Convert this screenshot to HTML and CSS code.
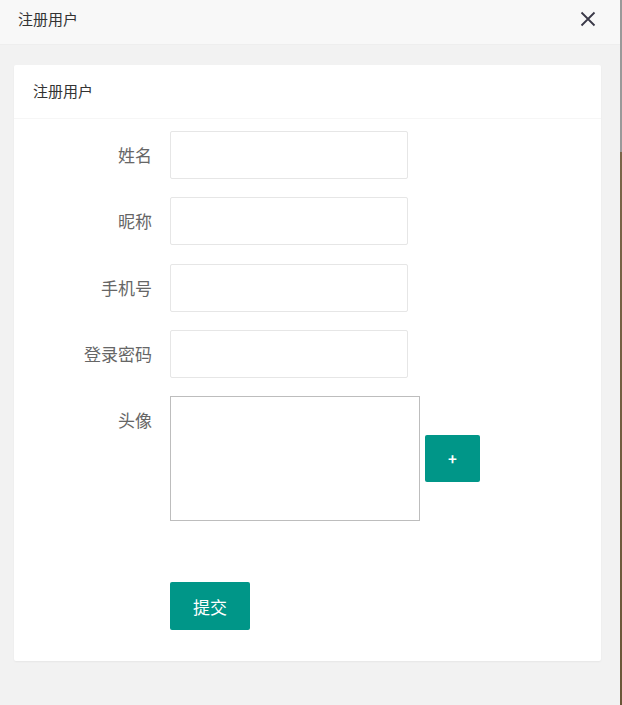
FILE: index.html
```html
<!DOCTYPE html>
<html lang="zh-CN">
<head>
    <meta charset="UTF-8">
    <meta name="viewport" content="width=device-width, initial-scale=1.0">
    <title>注册用户</title>
    <link rel="stylesheet" href="styles.css">
</head>
<body>

<div class="layer">
    <div class="layer-title">
        注册用户
        <span class="layer-close">
            <svg width="16" height="16" viewBox="0 0 16 16">
                <path d="M1.5 1.5 L14.5 14.5 M14.5 1.5 L1.5 14.5" stroke="#3a3948" stroke-width="1.8" fill="none"/>
            </svg>
        </span>
    </div>
    <div class="layer-content">
        <div class="card">
            <div class="card-header">注册用户</div>
            <div class="card-body">
                <div class="form-item">
                    <label class="form-label">姓名</label>
                    <input class="form-input" type="text">
                </div>
                <div class="form-item">
                    <label class="form-label">昵称</label>
                    <input class="form-input" type="text">
                </div>
                <div class="form-item">
                    <label class="form-label">手机号</label>
                    <input class="form-input" type="text">
                </div>
                <div class="form-item">
                    <label class="form-label">登录密码</label>
                    <input class="form-input" type="password">
                </div>
                <div class="form-item avatar-item">
                    <label class="form-label">头像</label>
                    <div class="avatar-row">
                        <div class="avatar-box"></div>
                        <button class="btn btn-add" type="button">+</button>
                    </div>
                </div>
                <div class="form-item submit-item">
                    <span></span>
                    <div>
                        <button class="btn btn-submit" type="button">提交</button>
                    </div>
                </div>
            </div>
        </div>
    </div>
</div>
<div class="edge"></div>

</body>
</html>
```

FILE: styles.css
```css
body {
    margin: 0;
    display: flex;
    height: 705px;
    overflow: hidden;
    font-family: "Noto Sans CJK SC", "Noto Sans", sans-serif;
    background: #f2f2f2;
}
.layer {
    width: 620px;
    height: 705px;
    background: #f2f2f2;
}
.edge {
    width: 2px;
    height: 705px;
    background: linear-gradient(#999 0, #999 152px, #7a6548 152px, #6a5637 100%);
}
.layer-title {
    position: relative;
    height: 44px;
    line-height: 38px;
    padding-left: 18px;
    font-size: 15px;
    color: #333;
    background: #f8f8f8;
    border-bottom: 1px solid #eee;
}
.layer-close {
    position: absolute;
    right: 24px;
    top: 11px;
    width: 16px;
    height: 16px;
    line-height: 0;
}
.layer-content {
    padding: 20px 19px 0 14px;
}
.card {
    background: #fff;
    border-radius: 2px;
    box-shadow: 0 1px 2px 0 rgba(0, 0, 0, 0.05);
}
.card-header {
    height: 53px;
    line-height: 51px;
    padding: 0 19px;
    font-size: 15px;
    color: #333;
    border-bottom: 1px solid #f6f6f6;
}
.card-body {
    padding: 12px 0 31px;
}
.form-item {
    display: grid;
    grid-template-columns: 138px auto;
    column-gap: 18px;
    margin-bottom: 18.33px;
}
.form-label {
    line-height: 48px;
    text-align: right;
    font-size: 17px;
    color: #666;
}
.form-input {
    width: 238px;
    height: 48px;
    box-sizing: border-box;
    border: 1px solid #e6e6e6;
    border-radius: 2px;
    outline: none;
    margin: 0;
}
.avatar-item {
    margin-bottom: 61px;
}
.avatar-row {
    display: flex;
    align-items: center;
    gap: 5px;
}
.avatar-box {
    width: 250px;
    height: 125px;
    box-sizing: border-box;
    border: 1px solid #bdbdbd;
}
.btn {
    border: none;
    border-radius: 2px;
    background: #009688;
    color: #fff;
    font-family: inherit;
    padding: 0;
    cursor: pointer;
}
.btn-add {
    width: 55px;
    height: 47px;
    font-size: 15px;
    font-weight: bold;
}
.btn-submit {
    width: 80px;
    height: 48px;
    font-size: 17px;
}
.submit-item {
    margin-bottom: 0;
}
```
